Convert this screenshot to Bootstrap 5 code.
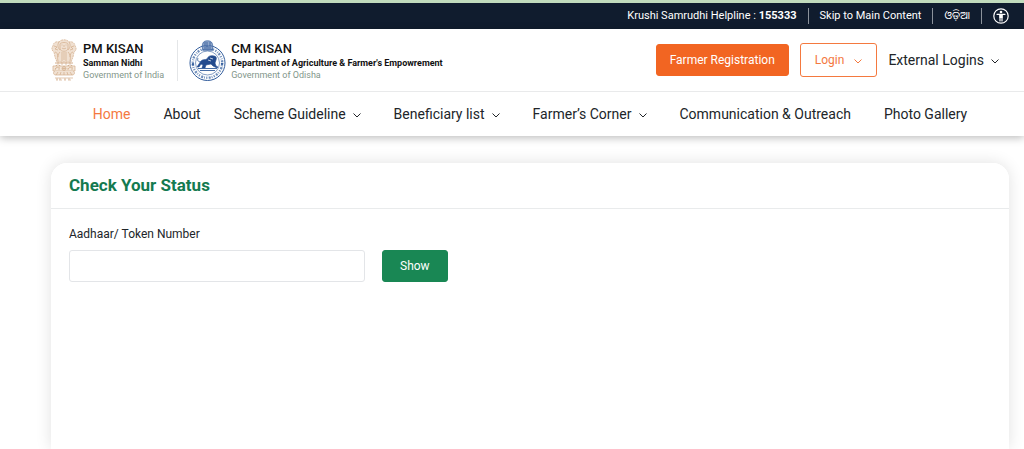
<!DOCTYPE html>
<html lang="en">
<head>
<meta charset="utf-8">
<meta name="viewport" content="width=device-width, initial-scale=1">
<title>CM KISAN - Check Your Status</title>
<link href="https://cdn.jsdelivr.net/npm/bootstrap@5.3.0/dist/css/bootstrap.min.css" rel="stylesheet">
<style>
  body { font-family: Roboto, "Noto Sans Oriya", "Liberation Sans", sans-serif; color: #212529; background: #fff; }
  a { color: inherit; text-decoration: none; }
  .util-bar { background: #101c2e; border-top: 3px solid #c1dbbd; height: 29px; font-size: 11px; line-height: 16px; padding-right: 15px; }
  .util-bar li + li { border-left: 1px solid #8b929b; margin-left: 11px; padding-left: 11px; }
  .site-head { box-shadow: 0 2px 8px rgba(0, 0, 0, .26); position: relative; }
  .brand-row { height: 63px; padding: 0 25px 0 51px; border-bottom: 1px solid #e9eaeb; }
  .brand-row svg { flex: none; }
  .org { font-size: 9px; line-height: 12px; color: #111; white-space: nowrap; }
  .org strong { display: block; font-size: 13px; line-height: 17px; font-weight: 500; }
  .org b { display: block; font-weight: 700; }
  .org span { display: block; color: #82968a; }
  .org-india { margin-left: 6px; }
  .org-odisha { margin-left: 5px; }
  .org-split { border-left: 1px solid #e4e6e8; padding-left: 11px; margin-left: 13px; height: 41px; }
  .btn { --bs-btn-font-size: 12px; --bs-btn-border-radius: 3px; line-height: 18px; white-space: nowrap; }
  .btn-reg { --bs-btn-color: #fff; --bs-btn-bg: #f26522; --bs-btn-border-color: #f26522; --bs-btn-hover-bg: #d95516; --bs-btn-hover-color: #fff; padding: 6px 13px; }
  .btn-login { --bs-btn-color: #f4793f; --bs-btn-border-color: #f4793f; --bs-btn-hover-bg: #f26522; --bs-btn-hover-color: #fff; padding: 7px 14px; }
  .btn-ext { --bs-btn-font-size: 14px; --bs-btn-color: #212529; padding: 7px 0; border: 0; }
  .action-row { gap: 11px; }
  .chev { width: 8px; height: 8px; fill: none; stroke: currentColor; stroke-width: 1; margin-left: 7px; }
  .main-menu { height: 44px; gap: 33px; font-size: 14px; padding-left: 36px; }
  .main-menu .nav-link { padding: 0; color: #212529; line-height: 20px; white-space: nowrap; }
  .main-menu .nav-link.active { color: #f4793f; }
  .page { padding: 27px 15px 0 51px; }
  .status-card { border: 0; border-radius: 16px 16px 0 0; box-shadow: 0 0 16px rgba(0, 0, 0, .12); }
  .status-card .card-header { background: #fff; border-bottom: 1px solid #e9ebec; padding: 10px 18px 11px; border-radius: 16px 16px 0 0; }
  .status-card h1 { font-size: 17px; line-height: 24px; font-weight: 700; color: #147a50; }
  .status-card .card-body { padding: 16px 18px; font-size: 12px; }
  .status-card .form-label { line-height: 18px; margin-bottom: 7px; }
  .status-card .form-control { border: 1px solid #e3e5e8; border-radius: 3px; height: 32px; font-size: 12px; }
  .token-row { gap: 17px; }
  .token-col { flex: 0 1 296px; }
  .btn-success { padding: 6px 17px; }
</style>
</head>
<body class="d-flex flex-column min-vh-100">
<div class="util-bar d-flex align-items-center justify-content-end text-white">
  <ul class="list-unstyled d-flex align-items-center mb-0">
    <li><a href="tel:155333">Krushi Samrudhi Helpline : <b>155333</b></a></li>
    <li><a href="#main">Skip to Main Content</a></li>
    <li><a href="#" lang="or">ଓଡ଼ିଆ</a></li>
    <li class="d-flex"><a href="#" class="d-flex" aria-label="Accessibility">
      <svg width="16" height="16" viewBox="0 0 16 16" fill="none" stroke="#fff"><circle cx="8" cy="8" r="7.2" stroke-width="1.2"/><circle cx="8" cy="4" r="1.3" fill="#fff" stroke="none"/><path d="M4 6.300h8M7 7v6M9 7v6" stroke-width="1.200" stroke-linecap="round"/><path d="M6.400 6.300h3.200v3.700H6.400z" fill="#fff" stroke="none"/></svg></a></li>
  </ul>
</div>

<header class="site-head bg-white">
  <div class="brand-row d-flex align-items-center">
    <a href="#" class="d-flex align-items-center">
      <svg width="26" height="42" viewBox="0 0 26 42" fill="none" stroke="#d3ad8b" stroke-width=".7" aria-hidden="true">
        <path d="M8 3c2-3 8-3 10 0 3-1 6 1 6 4 2 2 1 5-1 6l-1 5-2 5H6l-2-5-1-5C1 12 0 9 2 7c0-3 3-5 6-4z" fill="#f0e0d1" stroke-dasharray="2 .7"/>
        <path d="M8 3c-2 3-1 6 1 8m9-8c2 3 1 6-1 8M9 5c1-2 7-2 8 0v5c-1 3-7 3-8 0zM10.500 6h1m3 0h1M13 6v2m-2 1c1 1 3 1 4 0M3 7l3 1-2 2 3 1M23 7l-3 1 2 2-3 1M9 13c-2 2-3 5-2 9m10-9c2 2 3 5 2 9M11 13v9m4-9v9M13 13v8M4 13c2 0 3 3 3 5m15-5c-2 0-3 3-3 5M7 23v3m4-3v3m4-3v3m4-3v3"/>
        <path d="M4 24h18M5 26c1 2 3 2 4 0m8 0c1 2 3 2 4 0" stroke-width="1.200"/>
        <path d="M2 27h22v5H2z" fill="#f3e6d9"/><circle cx="13" cy="29.500" r="2"/><path d="M13 27.500v4m-2-2h4M4 30c1-2 3-2 5-1m8 1c1-2 3-2 5-1M4 31l1-2m3 2V29m9 2v-2m4 2v-2"/>
        <path d="M4 32c-2 1-2 3 0 4h18c2-1 2-3 0-4M7 33l-2 3m5-3-1 3m4-3v3m3-3 1 3m2-3 2 3" fill="#f0e0d1"/>
        <path d="M4 39h18M5 41h2m1 0h3m2 0h2m2 0h3M6 39v2m3-2v2m5-2v2m4-2v2"/>
      </svg>
      <span class="org org-india"><strong>PM KISAN</strong><b>Samman Nidhi</b><span>Government of India</span></span>
    </a>
    <a href="#" class="org-split d-flex align-items-center">
      <svg width="37" height="43" viewBox="0 0 37 43" fill="none" stroke="#315c9c" aria-hidden="true">
        <circle cx="18.500" cy="24" r="17.500" stroke-width="1" fill="#fff"/>
        <circle cx="18.500" cy="24" r="14.700" stroke-width="2.400" stroke-dasharray="1.200 1.300 .8 1 2 1.400" opacity=".7"/>
        <circle cx="18.500" cy="24" r="12" stroke-width=".6" fill="#fff"/>
        <path d="M14 11c-1-3-1-5 0-7 1-3 8-3 9 0 1 2 1 4 0 7z" fill="#8fa6c9" stroke-width=".7"/>
        <path d="M16 3v4m5-4v4m-3-4v5m-4-1h9M15 9h7M13 11h11" stroke-width=".8"/>
        <path d="M12 22c2-2 4-1 6-2 1-3 4-4 7-3 2 0 3 2 2 4l-1 3 1 3 2 1-1 1-4-2-2-2-5 1-1 3h-3l1-3-2-1-2 3-2 0 2-3z" fill="#234b8e" stroke="#234b8e" stroke-width=".6"/>
        <path d="M12 23c-3 0-4-2-3-4M9 29.500h19M11 31.500h15" stroke-width=".9"/>
        <path d="M21 19l3 1m-5 1 3 1" stroke="#fff" stroke-width=".7"/>
        <circle cx="4" cy="25" r=".8" fill="#315c9c"/><circle cx="33" cy="25" r=".8" fill="#315c9c"/>
      </svg>
      <span class="org org-odisha"><strong>CM KISAN</strong><b>Department of Agriculture &amp; Farmer's Empowrement</b><span>Government of Odisha</span></span>
    </a>
    <div class="action-row d-flex align-items-center ms-auto">
      <button type="button" class="btn btn-reg">Farmer Registration</button>
      <button type="button" class="btn btn-login">Login <svg class="chev" viewBox="0 0 8 8"><path d="M.5 2.500 4 6l3.500-3.500"/></svg></button>
      <button type="button" class="btn btn-ext">External Logins<svg class="chev" viewBox="0 0 8 8"><path d="M.5 2.500 4 6l3.500-3.500"/></svg></button>
    </div>
  </div>
  <nav aria-label="Main">
    <ul class="main-menu nav flex-nowrap align-items-center justify-content-center">
      <li><a class="nav-link active" href="#" aria-current="page">Home</a></li>
      <li><a class="nav-link" href="#">About</a></li>
      <li><a class="nav-link" href="#">Scheme Guideline<svg class="chev" viewBox="0 0 8 8"><path d="M.5 2.500 4 6l3.500-3.500"/></svg></a></li>
      <li><a class="nav-link" href="#">Beneficiary list<svg class="chev" viewBox="0 0 8 8"><path d="M.5 2.500 4 6l3.500-3.500"/></svg></a></li>
      <li><a class="nav-link" href="#">Farmer’s Corner<svg class="chev" viewBox="0 0 8 8"><path d="M.5 2.500 4 6l3.500-3.500"/></svg></a></li>
      <li><a class="nav-link" href="#">Communication &amp; Outreach</a></li>
      <li><a class="nav-link" href="#">Photo Gallery</a></li>
    </ul>
  </nav>
</header>

<main id="main" class="page d-flex flex-column flex-grow-1">
  <section class="card status-card flex-grow-1">
    <div class="card-header"><h1 class="mb-0">Check Your Status</h1></div>
    <form class="card-body">
      <label class="form-label d-block" for="token">Aadhaar/ Token Number</label>
      <div class="token-row d-flex">
        <div class="token-col"><input type="text" class="form-control" id="token"></div>
        <button type="button" class="btn btn-success">Show</button>
      </div>
    </form>
  </section>
</main>
<script src="https://cdn.jsdelivr.net/npm/bootstrap@5.3.0/dist/js/bootstrap.bundle.min.js"></script>
</body>
</html>
